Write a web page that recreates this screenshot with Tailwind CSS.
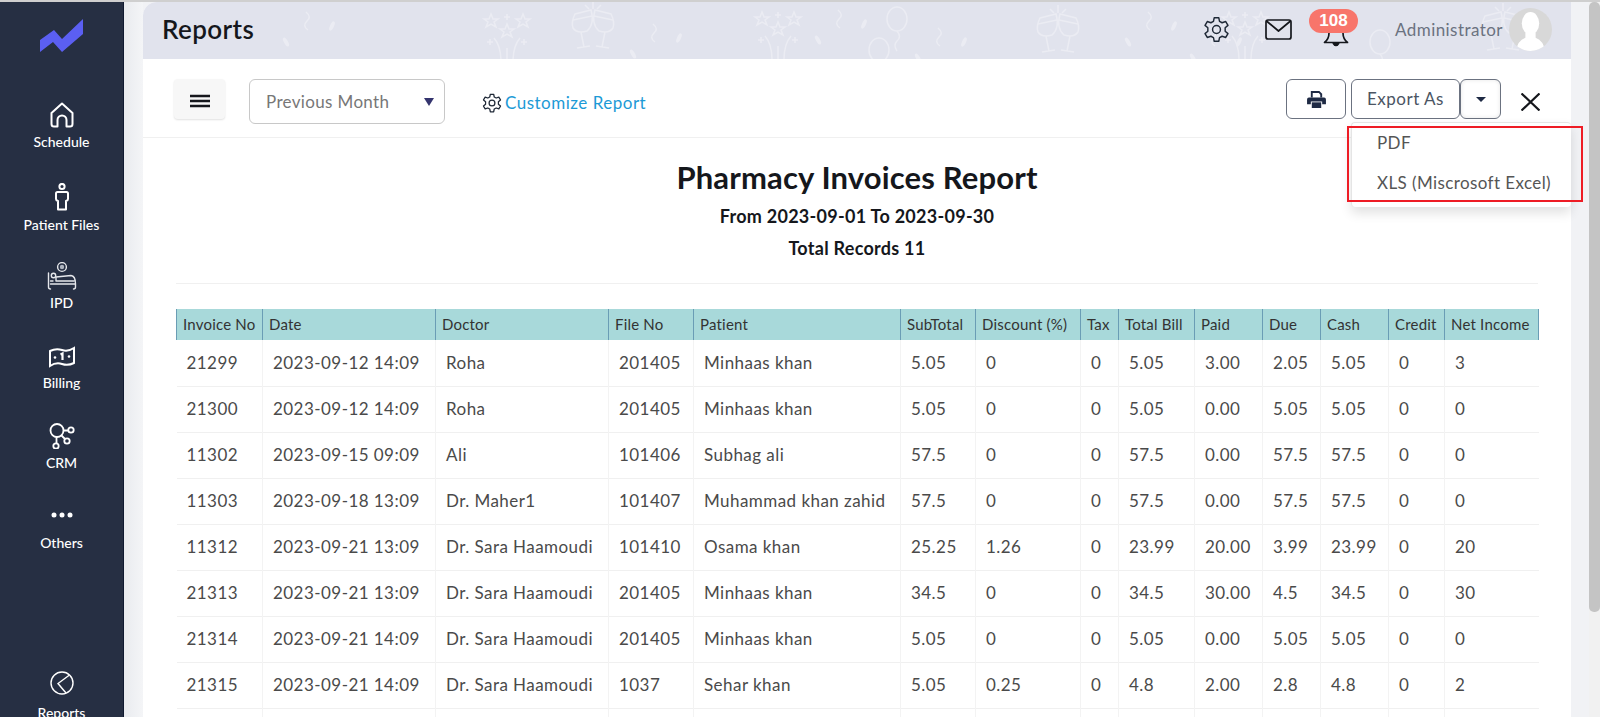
<!DOCTYPE html>
<html>
<head>
  <meta charset="UTF-8" />
  <script src="https://cdn.jsdelivr.net/npm/@tailwindcss/browser@4"></script>
</head>
<body class="bg-[#f1f2f5] overflow-hidden">
<div class="h-[717px] w-[1600px] flex flex-col font-['Lato','Open_Sans',sans-serif] text-[#444]">
  <div class="h-[2px] bg-[#cfcfcf] shrink-0"></div>
  <div class="flex flex-1 min-h-0">

    <!-- sidebar -->
    <aside class="w-[124px] shrink-0 bg-[#262f43] border-r border-[#111a30] text-white flex flex-col items-center overflow-hidden">
      <div class="h-[97px] w-full flex justify-center pt-[17px] shrink-0">
        <svg width="44" height="34" viewBox="0 0 44 34"><path d="M0 21 L14 11 L22 20 L43 0 V15 L22 33 L13 23 L0 33 Z" fill="#5b5ff2"/></svg>
      </div>
      <a class="h-[81px] w-full flex flex-col items-center shrink-0">
        <svg class="mt-[3px]" width="24" height="26" viewBox="0 0 24 26" fill="none" stroke="white" stroke-width="2" stroke-linejoin="round"><path d="M1.5 11 L12 1.5 L22.5 11 V22 Q22.5 24.5 20 24.5 H16.5 V18 A4.5 4.5 0 0 0 7.500 18 V24.5 H4 Q1.5 24.5 1.5 22 Z"/></svg>
        <span class="mt-[5px] text-[14px] leading-[18px] font-medium">Schedule</span>
      </a>
      <a class="h-[81px] w-full flex flex-col items-center shrink-0">
        <svg class="mt-[3px]" width="14" height="28" viewBox="0 0 14 28" fill="none" stroke="white" stroke-width="2"><circle cx="7" cy="3.5" r="2.6"/><path d="M2.5 9 H11.5 Q13 9 13 10.5 V16 Q13 17.5 11 18 V26.5 H3 V18 Q1 17.5 1 16 V10.5 Q1 9 2.5 9 Z" stroke-linejoin="round"/></svg>
        <span class="mt-[5px] text-[14px] leading-[18px] font-medium">Patient Files</span>
      </a>
      <a class="h-[80px] w-full flex flex-col items-center shrink-0">
        <svg class="mt-[1px]" width="30" height="28" viewBox="0 0 30 28" fill="none" stroke="#e5e7eb" stroke-width="1.4" stroke-linecap="round" stroke-linejoin="round"><circle cx="15" cy="5" r="4.4"/><circle cx="15" cy="5" r="2.2" fill="#aeb4c0" stroke="none"/><circle cx="6.500" cy="13.500" r="2.200"/><path d="M1.500 11 V25 Q1.500 27 3.500 27 M3.500 22 H28.500 V25 Q28.500 27 26.500 27 M3.500 19 H6 M9 15 L24 13.500 Q28.500 14 28.500 22 M9 15 V19 H27"/></svg>
        <span class="mt-[4px] text-[14px] leading-[18px] font-medium">IPD</span>
      </a>
      <a class="h-[80px] w-full flex flex-col items-center shrink-0">
        <svg class="mt-[5px]" width="26" height="22" viewBox="0 0 26 22" fill="none" stroke="white" stroke-width="2"><path d="M1 5 Q7 2 13 4 T25 2 V17 Q19 20 13 18 T1 20 Z"/><path d="M11.500 8.500 L13.500 7.500 V14" stroke-width="2.200"/><circle cx="6" cy="11.500" r="1.300" fill="white" stroke="none"/><circle cx="20" cy="10.500" r="1.300" fill="white" stroke="none"/></svg>
        <span class="mt-[6px] text-[14px] leading-[18px] font-medium">Billing</span>
      </a>
      <a class="h-[80px] w-full flex flex-col items-center shrink-0">
        <svg class="mt-[2px]" width="26" height="26" viewBox="0 0 26 26" fill="none" stroke="white" stroke-width="1.800"><circle cx="8" cy="7.500" r="6.500"/><circle cx="22" cy="7" r="2.700"/><circle cx="18" cy="18" r="2.700"/><circle cx="7" cy="23" r="2.700"/><path d="M14.500 7.500 H19.300 M12.500 12.500 L16 16 M7.500 14 V20.300"/></svg>
        <span class="mt-[5px] text-[14px] leading-[18px] font-medium">CRM</span>
      </a>
      <a class="h-[169px] w-full flex flex-col items-center shrink-0">
        <svg class="mt-[11px]" width="22" height="6" viewBox="0 0 22 6" fill="white"><circle cx="3" cy="3" r="2.500"/><circle cx="11" cy="3" r="2.500"/><circle cx="19" cy="3" r="2.500"/></svg>
        <span class="mt-[16px] text-[14px] leading-[18px] font-medium">Others</span>
      </a>
      <a class="w-full flex flex-col items-center shrink-0">
        <svg class="mt-[1px]" width="24" height="24" viewBox="0 0 24 24" fill="none" stroke="white" stroke-width="1.400"><circle cx="12" cy="12" r="11"/><path d="M19.500 4 L8 12.500 L16 22"/></svg>
        <span class="mt-[9px] text-[14px] leading-[18px] font-medium">Reports</span>
      </a>
    </aside>

    <div class="w-[19px] shrink-0 bg-gradient-to-r from-[#e9ebef] to-[#f4f5f7]"></div>

    <!-- main panel -->
    <main class="w-[1428px] shrink-0 bg-white relative flex flex-col rounded-tl-[14px] overflow-visible">
      <header class="h-[57px] shrink-0 bg-[#e1e3ed] rounded-tl-[14px] relative overflow-hidden flex items-center pl-[19px] pr-[19px] pb-[2px]">
        <svg class="absolute left-0 top-0" width="1428" height="57" fill="none" stroke="#ebecf3" stroke-width="1.500">
          <defs>
            <g id="fireworks">
              <path d="M0 -16 L2 -11 L7 -11 L3 -8 L5 -3 L0 -6 L-5 -3 L-3 -8 L-7 -11 L-2 -11 Z" transform="translate(-16 4)"/>
              <path d="M0 -16 L2 -11 L7 -11 L3 -8 L5 -3 L0 -6 L-5 -3 L-3 -8 L-7 -11 L-2 -11 Z" transform="translate(16 4)"/>
              <path d="M0 -16 L2 -11 L7 -11 L3 -8 L5 -3 L0 -6 L-5 -3 L-3 -8 L-7 -11 L-2 -11 Z" transform="translate(0 14)"/>
              <path d="M-13 12 Q-6 20 -6 36 M13 12 Q6 20 6 36 M0 22 V38 M-20 16 H-14 M-17 13 V19 M20 16 H14 M17 13 V19 M0 -12 V-6 M-3 -9 H3"/>
            </g>
            <g id="glasses">
              <path d="M-18 -14 L-2 -18 Q2 -4 -6 3 Q-16 6 -20 0 Q-22 -6 -18 -14 Z M-20 -8 L-1 -12 M-12 4 L-9 19 M-16 20 L-3 18"/>
              <path d="M2 -18 L18 -14 Q22 -6 20 0 Q16 6 6 3 Q-2 -4 2 -18 Z M1 -12 L20 -8 M12 4 L9 19 M16 20 L3 18"/>
              <path d="M0 -27 V-19 M-8 -23 L-4 -19 M8 -23 L4 -19"/>
            </g>
            <g id="balloon">
              <ellipse cx="0" cy="0" rx="10" ry="12"/><path d="M0 12 Q5 18 0 22 Q-4 26 0 32"/>
            </g>
            <g id="confetti">
              <path d="M0 -8 Q6 -3 1 1 Q-4 6 2 10"/>
              <ellipse cx="26" cy="6" rx="2" ry="5" transform="rotate(25 26 6)" fill="#ebecf3" stroke="none"/>
              <ellipse cx="-20" cy="22" rx="2" ry="5" transform="rotate(-30 -20 22)" fill="#ebecf3" stroke="none"/>
            </g>
          </defs>
          <use href="#fireworks" x="364" y="24"/>
          <use href="#glasses" x="450" y="26"/>
          <use href="#confetti" x="163" y="18"/>
          <use href="#confetti" x="510" y="30"/>
          <use href="#fireworks" x="635" y="22"/>
          <use href="#confetti" x="695" y="16"/>
          <use href="#balloon" x="754" y="17"/>
          <use href="#balloon" x="736" y="48"/>
          <use href="#confetti" x="795" y="34"/>
          <use href="#glasses" x="915" y="30"/>
          <use href="#confetti" x="1005" y="18"/>
          <use href="#confetti" x="1070" y="34"/>
          <use href="#fireworks" x="1102" y="22"/>
          <use href="#balloon" x="1237" y="40"/>
          <use href="#glasses" x="1360" y="28"/>
        </svg>
        <h1 class="relative mb-[1px] text-[26px] leading-[32px] font-semibold text-[#15171c] tracking-[0.4px]">Reports</h1>
        <div class="relative ml-auto flex items-center">
          <svg width="27" height="27" viewBox="0 0 24 24" fill="none" stroke="#1f2937" stroke-width="1.300" stroke-linejoin="round"><path d="M10 1.500 H14 L14.700 4.800 L17 6 L20.200 4.900 L22.200 8.300 L19.700 10.500 V13.500 L22.200 15.700 L20.200 19.100 L17 18 L14.700 19.200 L14 22.500 H10 L9.300 19.200 L7 18 L3.800 19.100 L1.800 15.700 L4.300 13.500 V10.500 L1.800 8.300 L3.800 4.900 L7 6 L9.300 4.800 Z"/><circle cx="12" cy="12" r="3.500"/></svg>
          <svg class="ml-[35px]" width="27" height="21" viewBox="0 0 27 21" fill="none" stroke="#15171c" stroke-width="1.700" stroke-linejoin="round"><rect x="1" y="1" width="25" height="19" rx="2"/><path d="M1.500 2 L13.500 12 L25.500 2"/></svg>
          <div class="relative ml-[25px] w-[32px] h-[36px]">
            <svg class="absolute left-[6px] top-[11px]" width="26" height="24" viewBox="0 0 26 24" fill="none" stroke="#15171c" stroke-width="1.700" stroke-linejoin="round"><path d="M13 1 Q6 2 6 10 Q6 16 1.500 19.500 H24.500 Q20 16 20 10 Q20 2 13 1 Z"/><path d="M10 20 Q13 25 16 20" fill="#15171c"/></svg>
            <span class="absolute left-[-8px] top-[-3px] w-[49px] h-[24px] rounded-full bg-[#f8756b] text-white text-[17px] leading-[24px] font-bold text-center font-['Liberation_Sans',sans-serif]">108</span>
          </div>
          <span class="ml-[46px] text-[17px] text-[#6b7280] tracking-[0.45px]">Administrator</span>
          <div class="ml-[6px] w-[43px] h-[43px] rounded-full bg-[#d8d8d8] overflow-hidden">
            <svg width="43" height="43" viewBox="0 0 42 42" fill="white"><ellipse cx="21" cy="15" rx="8.500" ry="11"/><path d="M16 24 V29 Q8 32 7 42 H35 Q34 32 26 29 V24 Z"/></svg>
          </div>
        </div>
      </header>

      <!-- toolbar -->
      <div class="h-[79px] shrink-0 border-b border-[#f0f0f0] flex items-start pt-[20px] pl-[31px]">
        <button class="w-[51px] h-[40px] pt-[3px] rounded-[4px] bg-[#f7f7f7] shadow-[0_1px_2px_rgba(0,0,0,0.12)] flex items-center justify-center">
          <svg width="20" height="14" viewBox="0 0 20 14" stroke="#15171c" stroke-width="2.400"><path d="M0 2 H20 M0 7 H20 M0 12 H20"/></svg>
        </button>
        <div class="ml-[24px] w-[196px] h-[45px] rounded-[6px] border border-[#c8c8c8] flex items-center pl-[16px] pr-[10px] text-[17px] text-[#777] tracking-[0.35px]">
          Previous Month
          <svg class="ml-auto" width="10" height="8" viewBox="0 0 10 8"><path d="M0 0 H10 L5 8 Z" fill="#34346e"/></svg>
        </div>
        <a class="ml-[37px] h-[48px] flex items-center text-[17px] text-[#1c9ad6] tracking-[0.5px]">
          <svg class="mr-[3px]" width="20" height="20" viewBox="0 0 24 24" fill="none" stroke="#1f2937" stroke-width="1.500" stroke-linejoin="round"><path d="M10 1.500 H14 L14.700 4.800 L17 6 L20.200 4.900 L22.200 8.300 L19.700 10.500 V13.500 L22.200 15.700 L20.200 19.100 L17 18 L14.700 19.200 L14 22.500 H10 L9.300 19.200 L7 18 L3.800 19.100 L1.800 15.700 L4.300 13.500 V10.500 L1.800 8.300 L3.800 4.900 L7 6 L9.300 4.800 Z"/><circle cx="12" cy="12" r="3.500"/></svg>
          Customize Report
        </a>
        <div class="ml-auto flex items-start">
          <button class="w-[60px] h-[40px] rounded-[6px] border border-[#6b7280] flex items-center justify-center">
            <svg width="19" height="17" viewBox="0 0 20 18" fill="#1e2a44"><path fill-rule="evenodd" d="M4 0 H13 L16 3 V7 H14 V4 L12.500 2 H6 V7 H4 Z"/><path d="M2 7 H18 Q20 7 20 9 V14 H16 V11 H4 V14 H0 V9 Q0 7 2 7 Z"/><path d="M5 12 H15 V18 H5 Z"/></svg>
          </button>
          <button class="ml-[5px] w-[109px] h-[40px] rounded-[6px] border border-[#6b7280] text-[17px] text-[#4b5563] tracking-[0.5px]">Export As</button>
          <button class="w-[41px] h-[40px] rounded-[6px] border border-[#6b7280] flex items-center justify-center shadow-[inset_0_0_4px_rgba(0,0,0,0.1)]">
            <svg width="10" height="5" viewBox="0 0 10 5"><path d="M0 0 H10 L5 5 Z" fill="#1e2a44"/></svg>
          </button>
          <button class="ml-[20px] mr-[31px] w-[19px] h-[46px] flex items-center justify-center">
            <svg width="19" height="18" viewBox="0 0 19 18" stroke="#15171c" stroke-width="2.200"><path d="M0.500 0.500 L18.500 17.500 M18.500 0.500 L0.500 17.500"/></svg>
          </button>
        </div>
      </div>

      <!-- export dropdown -->
      <div class="absolute left-[1208px] top-[120px] w-[220px] h-[85px] bg-white rounded-[4px] border-t border-l border-[#e5e5e5] shadow-[0_6px_12px_rgba(0,0,0,0.12)]"></div>
      <div class="absolute left-[1204px] top-[124px] w-[236px] h-[76px] border-2 border-[#ee1c25] flex flex-col gap-[20px] text-[17px] leading-[20px] text-[#555] tracking-[0.4px] pl-[28px] pt-[5px]">
        <span>PDF</span>
        <span>XLS (Miscrosoft Excel)</span>
      </div>

      <!-- report -->
      <div class="px-[33px] flex-1 min-h-0 overflow-hidden">
        <div class="text-center border-b border-[#f0f0f0] h-[146px] pt-[21px]">
          <h2 class="text-[31px] leading-[36px] font-bold text-[#15171c] tracking-[0.15px]">Pharmacy Invoices Report</h2>
          <p class="mt-[10px] text-[18px] leading-[22px] font-bold text-[#15171c] tracking-[0.27px]">From 2023-09-01 To 2023-09-30</p>
          <p class="mt-[10px] text-[18px] leading-[22px] font-bold text-[#15171c] tracking-[0.27px]">Total Records 11</p>
        </div>
        <table class="mt-[25px] w-[1362px] table-fixed border-collapse">
          <colgroup>
            <col class="w-[86px]" /><col class="w-[173px]" /><col class="w-[173px]" /><col class="w-[85px]" /><col class="w-[207px]" />
            <col class="w-[75px]" /><col class="w-[105px]" /><col class="w-[38px]" /><col class="w-[76px]" /><col class="w-[68px]" />
            <col class="w-[58px]" /><col class="w-[68px]" /><col class="w-[56px]" /><col class="w-[94px]" />
          </colgroup>
          <thead>
            <tr class="h-[31px] bg-[#a8d9da]" id="headRow"></tr>
          </thead>
          <tbody id="rows"></tbody>
        </table>
      </div>
    </main>

    <!-- page scrollbar -->
    <div class="w-[18px] shrink-0 bg-[#f1f2f5]"></div>
    <div class="w-[11px] shrink-0 bg-[#f1f1f1]">
      <div class="h-[610px] rounded-[5px] bg-[#c4c4c4]"></div>
    </div>
  </div>
</div>

<script>
  const headers = ['Invoice No', 'Date', 'Doctor', 'File No', 'Patient', 'SubTotal', 'Discount (%)', 'Tax', 'Total Bill', 'Paid', 'Due', 'Cash', 'Credit', 'Net Income'];

  const rows = [
    ['21299', '2023-09-12 14:09', 'Roha', '201405', 'Minhaas khan', '5.05', '0', '0', '5.05', '3.00', '2.05', '5.05', '0', '3'],
    ['21300', '2023-09-12 14:09', 'Roha', '201405', 'Minhaas khan', '5.05', '0', '0', '5.05', '0.00', '5.05', '5.05', '0', '0'],
    ['11302', '2023-09-15 09:09', 'Ali', '101406', 'Subhag ali', '57.5', '0', '0', '57.5', '0.00', '57.5', '57.5', '0', '0'],
    ['11303', '2023-09-18 13:09', 'Dr. Maher1', '101407', 'Muhammad khan zahid', '57.5', '0', '0', '57.5', '0.00', '57.5', '57.5', '0', '0'],
    ['11312', '2023-09-21 13:09', 'Dr. Sara Haamoudi', '101410', 'Osama khan', '25.25', '1.26', '0', '23.99', '20.00', '3.99', '23.99', '0', '20'],
    ['21313', '2023-09-21 13:09', 'Dr. Sara Haamoudi', '201405', 'Minhaas khan', '34.5', '0', '0', '34.5', '30.00', '4.5', '34.5', '0', '30'],
    ['21314', '2023-09-21 14:09', 'Dr. Sara Haamoudi', '201405', 'Minhaas khan', '5.05', '0', '0', '5.05', '0.00', '5.05', '5.05', '0', '0'],
    ['21315', '2023-09-21 14:09', 'Dr. Sara Haamoudi', '1037', 'Sehar khan', '5.05', '0.25', '0', '4.8', '2.00', '2.8', '4.8', '0', '2'],
    ['', '', '', '', '', '', '', '', '', '', '', '', '', '']
  ];

  document.getElementById('headRow').innerHTML = headers.map(h =>
    `<th class="px-[6px] text-left text-[15px] font-normal text-[#333] whitespace-nowrap border-l border-[#6a9db5] last:border-r tracking-[0.2px]">${h}</th>`
  ).join('');

  document.getElementById('rows').innerHTML = rows.map(r =>
    `<tr class="h-[46px] border-b border-[#f0f0f0]">` + r.map(c =>
      `<td class="pl-[10px] text-[17px] text-[#4a4a4a] whitespace-nowrap border-l border-[#f3f3f3] first:border-l-0 tracking-[0.45px]">${c}</td>`
    ).join('') + `</tr>`
  ).join('');
</script>
</body>
</html>
